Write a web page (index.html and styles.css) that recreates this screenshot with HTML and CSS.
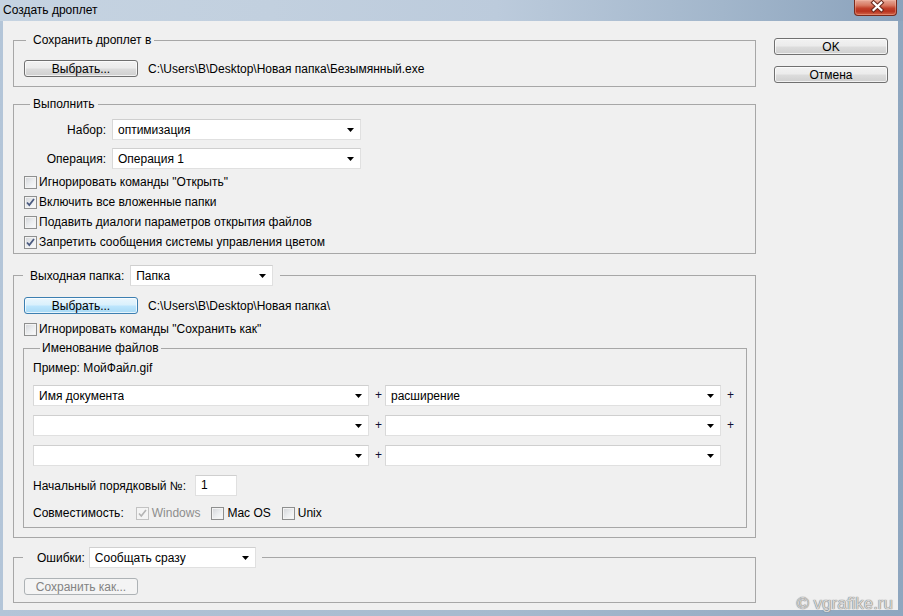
FILE: index.html
```html
<!DOCTYPE html>
<html lang="ru">
<head>
<meta charset="utf-8">
<title>Создать дроплет</title>
<link rel="stylesheet" href="styles.css">
</head>
<body>
<div class="window">
  <div class="titlebar">
    <span class="title">Создать дроплет</span>
    <div class="close">
      <svg width="43" height="16" viewBox="0 0 43 16">
        <path d="M20 2.5 L28 10 M28 2.5 L20 10" stroke="#6b2a1e" stroke-width="4.4" stroke-linecap="square" fill="none"/>
        <path d="M20 2.5 L28 10 M28 2.5 L20 10" stroke="#ffffff" stroke-width="2.2" stroke-linecap="square" fill="none"/>
      </svg>
    </div>
  </div>
  <div class="body">
    <div class="main">
      <fieldset class="group g1">
        <legend>Сохранить дроплет в</legend>
        <div class="btn-row">
          <div class="btn">Выбрать...</div>
          <span class="path">C:\Users\B\Desktop\Новая папка\Безымянный.exe</span>
        </div>
      </fieldset>

      <fieldset class="group g2">
        <legend>Выполнить</legend>
        <div class="field-row">
          <span class="field-label">Набор:</span>
          <div class="select w-set"><span class="select-text">оптимизация</span><svg class="arrow" width="7" height="4" viewBox="0 0 7 4"><polygon points="0,0 7,0 3.5,4" fill="#000"/></svg></div>
        </div>
        <div class="field-row second">
          <span class="field-label">Операция:</span>
          <div class="select w-set"><span class="select-text">Операция 1</span><svg class="arrow" width="7" height="4" viewBox="0 0 7 4"><polygon points="0,0 7,0 3.5,4" fill="#000"/></svg></div>
        </div>
        <div class="checks">
          <div class="check-row"><span class="cb"></span><span>Игнорировать команды "Открыть"</span></div>
          <div class="check-row"><span class="cb"><svg width="11" height="11" viewBox="0 0 11 11"><path d="M2 5.5 L4.3 8 L9 2" stroke="#4b5b80" stroke-width="1.8" fill="none"/></svg></span><span>Включить все вложенные папки</span></div>
          <div class="check-row"><span class="cb"></span><span>Подавить диалоги параметров открытия файлов</span></div>
          <div class="check-row"><span class="cb"><svg width="11" height="11" viewBox="0 0 11 11"><path d="M2 5.5 L4.3 8 L9 2" stroke="#4b5b80" stroke-width="1.8" fill="none"/></svg></span><span>Запретить сообщения системы управления цветом</span></div>
        </div>
      </fieldset>

      <fieldset class="group g3">
        <legend class="legend-combo">
          <span class="legend-label">Выходная папка:</span>
          <div class="select w-out"><span class="select-text">Папка</span><svg class="arrow" width="7" height="4" viewBox="0 0 7 4"><polygon points="0,0 7,0 3.5,4" fill="#000"/></svg></div>
        </legend>
        <div class="btn-row">
          <div class="btn btn-default">Выбрать...</div>
          <span class="path">C:\Users\B\Desktop\Новая папка\</span>
        </div>
        <div class="check-row save-as"><span class="cb"></span><span>Игнорировать команды "Сохранить как"</span></div>

        <fieldset class="group naming">
          <legend>Именование файлов</legend>
          <div class="example">Пример: МойФайл.gif</div>
          <div class="name-grid">
            <div class="select"><span class="select-text">Имя документа</span><svg class="arrow" width="7" height="4" viewBox="0 0 7 4"><polygon points="0,0 7,0 3.5,4" fill="#000"/></svg></div>
            <span class="plus">+</span>
            <div class="select"><span class="select-text">расширение</span><svg class="arrow" width="7" height="4" viewBox="0 0 7 4"><polygon points="0,0 7,0 3.5,4" fill="#000"/></svg></div>
            <span class="plus">+</span>

            <div class="select"><span class="select-text"></span><svg class="arrow" width="7" height="4" viewBox="0 0 7 4"><polygon points="0,0 7,0 3.5,4" fill="#000"/></svg></div>
            <span class="plus">+</span>
            <div class="select"><span class="select-text"></span><svg class="arrow" width="7" height="4" viewBox="0 0 7 4"><polygon points="0,0 7,0 3.5,4" fill="#000"/></svg></div>
            <span class="plus">+</span>

            <div class="select"><span class="select-text"></span><svg class="arrow" width="7" height="4" viewBox="0 0 7 4"><polygon points="0,0 7,0 3.5,4" fill="#000"/></svg></div>
            <span class="plus">+</span>
            <div class="select"><span class="select-text"></span><svg class="arrow" width="7" height="4" viewBox="0 0 7 4"><polygon points="0,0 7,0 3.5,4" fill="#000"/></svg></div>
            <span class="plus"></span>
          </div>
          <div class="start-row">
            <span>Начальный порядковый №:</span>
            <div class="num-input">1</div>
          </div>
          <div class="compat-row">
            <span class="compat-label">Совместимость:</span>
            <span class="compat-item disabled"><span class="cb cb-disabled"><svg width="11" height="11" viewBox="0 0 11 11"><path d="M2 5.5 L4.3 8 L9 2" stroke="#b4b4b4" stroke-width="1.6" fill="none"/></svg></span><span>Windows</span></span>
            <span class="compat-item"><span class="cb"></span><span>Mac OS</span></span>
            <span class="compat-item"><span class="cb"></span><span>Unix</span></span>
          </div>
        </fieldset>
      </fieldset>

      <fieldset class="group g4">
        <legend class="legend-combo">
          <span class="legend-label">Ошибки:</span>
          <div class="select w-err"><span class="select-text">Сообщать сразу</span><svg class="arrow" width="7" height="4" viewBox="0 0 7 4"><polygon points="0,0 7,0 3.5,4" fill="#000"/></svg></div>
        </legend>
        <div class="btn btn-disabled">Сохранить как...</div>
      </fieldset>
    </div>

    <div class="side">
      <div class="btn">OK</div>
      <div class="btn">Отмена</div>
    </div>
  </div>
  <div class="watermark">© vgrafike.ru</div>
</div>
</body>
</html>
```

FILE: styles.css
```css
* { box-sizing: border-box; }

html, body {
  margin: 0;
  padding: 0;
}

body {
  width: 903px;
  height: 616px;
  overflow: hidden;
  font-family: "Liberation Sans", Arial, sans-serif;
  font-size: 12px;
  color: #000;
}

.window {
  position: relative;
  width: 903px;
  height: 616px;
  display: flex;
  flex-direction: column;
  background: linear-gradient(90deg, #b3c5d8 0%, #a6bace 55%, #8ea6bf 100%);
}

.titlebar {
  flex: none;
  height: 21px;
  display: flex;
  justify-content: space-between;
  align-items: flex-start;
  padding: 0 6px 0 3px;
  background: linear-gradient(90deg, #c5d3e1 0%, #c2d0df 30%, #bccbdc 55%, #a2b6cb 80%, #8aa2bc 100%);
}

.title {
  line-height: 20px;
  font-size: 12px;
  color: #000;
}

.close {
  width: 43px;
  height: 16px;
  border: 1px solid #7a2a1c;
  border-top: none;
  border-radius: 0 0 4px 4px;
  background: linear-gradient(180deg, #e6a999 0%, #d87a63 35%, #c1412b 55%, #b8321e 75%, #d3684c 100%);
  box-shadow: inset 0 0 0 1px rgba(255, 200, 180, 0.35);
  display: flex;
}

.close svg { display: block; margin-left: -1px; }

.body {
  flex: 1;
  margin: 0 5px 6px 3px;
  background: #f0f0f0;
  display: flex;
  gap: 18px;
  padding: 12px 10px 0 10px;
}

.main {
  width: 743px;
  flex: none;
  display: flex;
  flex-direction: column;
}

.side {
  width: 114px;
  flex: none;
  display: flex;
  flex-direction: column;
  gap: 11px;
  padding-top: 5px;
}

/* Group boxes */
.group {
  margin: 0;
  min-width: 0;
  border: 1px solid #a7a7a7;
  padding: 0 10px;
}

.group legend {
  line-height: 14px;
  padding: 0 3px;
}

.g1 { padding: 13px 10px 9px 10px; }
.g1 legend { margin-left: 2px; padding: 0 3px 0 7px; }

.g2 { margin-top: 10px; padding: 8px 10px 1px 10px; }
.g2 legend { margin-left: 6px; padding: 0 3px; }

.g3 { margin-top: 11px; padding: 11px 8px 9px 10px; }
.g3 legend.legend-combo { margin-left: -1px; padding: 0 7px 0 7px; }

.g4 { margin-top: 9px; padding: 10px 10px 7px 10px; }
.g4 legend.legend-combo { margin-left: -1px; padding: 0 6px 0 14px; }

.legend-combo {
  display: flex;
  align-items: center;
  gap: 6px;
}

.g4 .legend-combo { gap: 4px; }

.naming {
  margin: 2px 0 0 -1px;
  padding: 5px 8px 4px 9px;
}

.naming legend { margin-left: 7px; padding: 0 2px; }

/* Buttons */
.btn {
  height: 17px;
  width: 114px;
  flex: none;
  border: 1px solid #707070;
  border-radius: 3px;
  background: linear-gradient(180deg, #f2f2f2 0%, #ebebeb 49%, #dddddd 51%, #cfcfcf 100%);
  box-shadow: inset 0 0 0 1px rgba(255, 255, 255, 0.7);
  display: flex;
  align-items: center;
  justify-content: center;
  line-height: 14px;
  color: #000;
}

.btn-default {
  border-color: #3c7fb1;
  background: linear-gradient(180deg, #eaf6fd 0%, #d9f0fc 49%, #bee6fd 51%, #a7d9f5 100%);
}

.btn-disabled {
  border-color: #adb2b5;
  background: #f4f4f4;
  box-shadow: none;
  color: #838383;
}

.btn-row {
  display: flex;
  align-items: center;
  gap: 10px;
}

/* Fields */
.field-row {
  display: flex;
  align-items: center;
  gap: 6px;
  height: 21px;
}

.field-row.second { margin-top: 8px; }

.field-label {
  width: 82px;
  text-align: right;
}

.select {
  height: 21px;
  background: #fff;
  border: 1px solid #e0e0e0;
  border-top-color: #cfcfcf;
  border-left-color: #d8d8d8;
  display: flex;
  align-items: center;
  justify-content: space-between;
  padding: 0 6px 0 5px;
}

.select-text {
  white-space: nowrap;
  overflow: hidden;
}

.arrow { flex: none; display: block; }

.w-set { width: 249px; }
.w-out { width: 143px; }
.w-err { width: 167px; }

/* Checkboxes */
.checks { margin-top: 3px; }

.check-row {
  display: flex;
  align-items: center;
  height: 20px;
  gap: 2px;
}

.save-as { margin-top: 5px; }

.cb {
  width: 13px;
  height: 13px;
  flex: none;
  border: 1px solid #8e8f8f;
  background: linear-gradient(135deg, #d2d4d8 0%, #eceef0 55%, #fbfbfb 100%);
  box-shadow: inset 0 0 0 1px #f3f3f3;
  display: flex;
  align-items: center;
  justify-content: center;
}

.cb svg { display: block; }

.cb-disabled {
  border-color: #c2c2c2;
  background: #f4f4f4;
  box-shadow: none;
}

/* Naming group */
.example {
  line-height: 16px;
  height: 16px;
}

.name-grid {
  margin-top: 9px;
  display: grid;
  grid-template-columns: 336px 16px 336px 16px;
  grid-auto-rows: 21px;
  row-gap: 9px;
}

.plus {
  padding-left: 6px;
  line-height: 21px;
  color: #101035;
}

.start-row {
  margin-top: 9px;
  display: flex;
  align-items: center;
  gap: 9px;
  height: 21px;
}

.num-input {
  width: 42px;
  height: 21px;
  background: #fff;
  border: 1px solid #e0e0e0;
  border-top-color: #cfcfcf;
  padding-left: 5px;
  line-height: 19px;
}

.compat-row {
  margin-top: 7px;
  height: 20px;
  display: flex;
  align-items: center;
}

.compat-label { margin-right: 12px; }

.compat-item {
  display: flex;
  align-items: center;
  gap: 3px;
  margin-right: 11px;
}

.compat-item.disabled { color: #8d8d8d; }

.path { white-space: nowrap; }

/* Watermark overlay */
.watermark {
  position: absolute;
  right: 10px;
  bottom: 2px;
  font-size: 17px;
  line-height: 20px;
  color: #d6d6d6;
  text-shadow: 0 0 1px #7a7a7a, 0 0 1px #7a7a7a;
}
```
